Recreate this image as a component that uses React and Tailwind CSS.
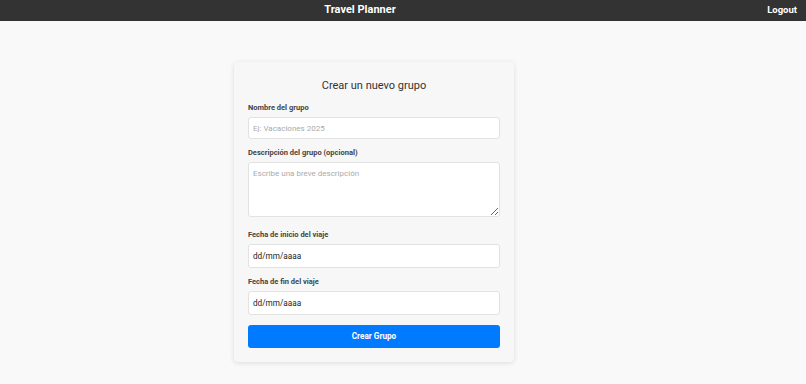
import React from 'react';

const Field = ({ label, children, className = '' }) => (
  <div className={`flex flex-col ${className}`}>
    <label className="text-[7.5px] font-bold text-[#444] leading-[10px] mb-[4px]">{label}</label>
    {children}
  </div>
);

export default function App() {
  return (
    <div className="min-h-screen bg-[#f9f9f9] font-['Roboto',_'Liberation_Sans',_sans-serif]">
      <header className="h-[21px] bg-[#333333] flex items-center pb-[2px]">
        <div className="flex-1 flex justify-center">
          <span className="text-white font-bold text-[11px] leading-none">Travel Planner</span>
        </div>
        <div className="w-[86px] flex justify-end pr-[9px]">
          <button className="text-white font-bold text-[9.5px] leading-none">Logout</button>
        </div>
      </header>

      <main className="flex justify-center pt-[41px] pr-[58px]">
        <form className="w-[280px] bg-[#f7f7f7] rounded-[4px] shadow-[0_1px_5px_rgba(0,0,0,0.12)] px-[14px] pt-[16px] pb-[14px] flex flex-col">
          <h2 className="text-center text-[11px] text-[#333] leading-[16px] mb-[9px]">Crear un nuevo grupo</h2>

          <Field label="Nombre del grupo">
            <input
              type="text"
              placeholder="Ej: Vacaciones 2025"
              className="h-[22px] bg-white border border-[#e2e2e2] rounded-[3px] px-[4px] text-[8px] placeholder:text-[#aaa] outline-none"
            />
          </Field>

          <Field label="Descripción del grupo (opcional)" className="mt-[9px]">
            <textarea
              placeholder="Escribe una breve descripción"
              className="block h-[55px] bg-white border border-[#e2e2e2] rounded-[3px] px-[4px] pt-[6px] text-[8px] leading-[10px] placeholder:text-[#aaa] outline-none"
            />
          </Field>

          <Field label="Fecha de inicio del viaje" className="mt-[13px]">
            <div className="h-[24px] bg-white border border-[#e2e2e2] rounded-[3px] px-[4px] flex items-center text-[8.2px] text-[#222]">
              dd/mm/aaaa
            </div>
          </Field>

          <Field label="Fecha de fin del viaje" className="mt-[9px]">
            <div className="h-[24px] bg-white border border-[#e2e2e2] rounded-[3px] px-[4px] flex items-center text-[8.2px] text-[#222]">
              dd/mm/aaaa
            </div>
          </Field>

          <button
            type="button"
            className="mt-[10px] h-[23px] bg-[#007bff] rounded-[3px] text-white font-bold text-[8.2px]"
          >
            Crear Grupo
          </button>
        </form>
      </main>
    </div>
  );
}
